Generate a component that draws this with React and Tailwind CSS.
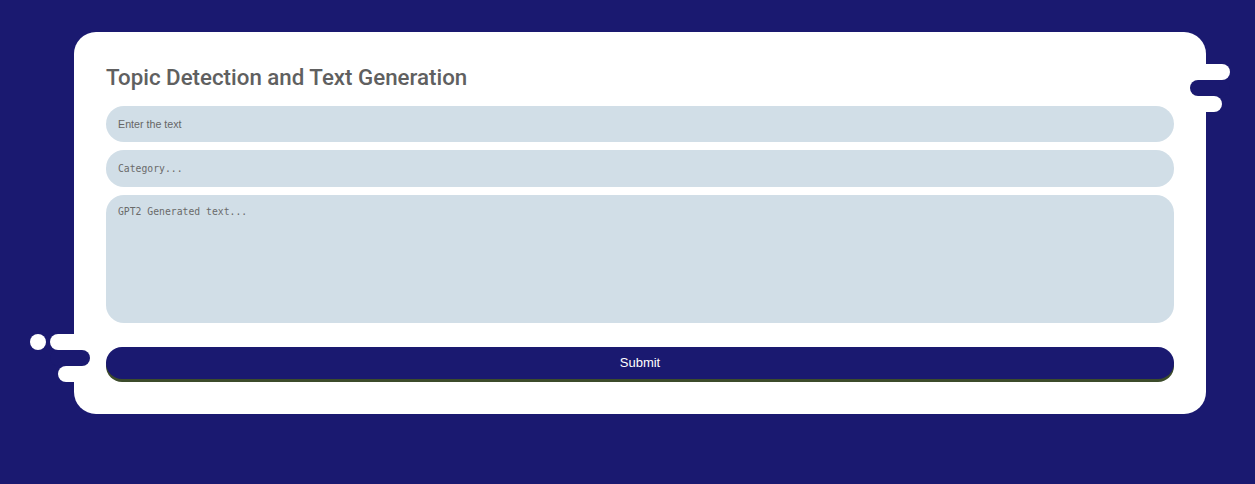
import React from "react";

export default function App() {
  return (
    <main className="relative min-h-screen w-full bg-[#1a1970] pt-[32px] pl-[74px] overflow-hidden">
      {/* Form card */}
      <div className="relative w-[1132px] h-[382px] bg-white rounded-[22px] px-[32px] pt-[31px]">
        {/* Right side decorations */}
        <div className="absolute left-[1116px] top-[32px] w-[40px] h-[16px] rounded-full bg-white" />
        <div className="absolute left-[1116px] top-[48px] w-[40px] h-[16px] rounded-full bg-[#1a1970]" />
        <div className="absolute left-[1108px] top-[64px] w-[40px] h-[16px] rounded-full bg-white" />

        {/* Left side decorations */}
        <div className="absolute left-[-44px] top-[302px] w-[16px] h-[16px] rounded-full bg-white" />
        <div className="absolute left-[-24px] top-[302px] w-[40px] h-[16px] rounded-full bg-white" />
        <div className="absolute left-[-24px] top-[318px] w-[40px] h-[16px] rounded-full bg-[#1a1970]" />
        <div className="absolute left-[-16px] top-[334px] w-[32px] h-[16px] rounded-full bg-white" />

        <h1 className="font-['Roboto',sans-serif] font-medium text-[22.3px] leading-[28px] text-[#606060] mb-[15px]">
          Topic Detection and Text Generation
        </h1>

        <div className="flex flex-col">
          <input
            type="text"
            placeholder="Enter the text"
            className="h-[36px] w-full rounded-[18px] bg-[#d1dee7] px-[12px] font-['Liberation_Sans',sans-serif] text-[10.7px] text-[#555] placeholder:text-[#666] outline-none"
          />
          <input
            type="text"
            placeholder="Category..."
            className="mt-[8px] h-[37px] w-full rounded-[18px] bg-[#d1dee7] px-[12px] font-['DejaVu_Sans_Mono',monospace] text-[9.75px] placeholder:text-[#6a6a6a] outline-none"
          />
          <textarea
            placeholder="GPT2 Generated text..."
            className="mt-[8px] h-[128px] w-full resize-none rounded-[18px] bg-[#d1dee7] px-[12px] py-[10px] font-['DejaVu_Sans_Mono',monospace] text-[9.75px] placeholder:text-[#6a6a6a] outline-none"
          />
          <button className="mt-[24px] h-[32px] w-full rounded-[16px] bg-[#1a1970] shadow-[0_3px_0_#3c4b2b] font-['Liberation_Sans',sans-serif] text-[13px] text-white">
            Submit
          </button>
        </div>
      </div>
    </main>
  );
}
